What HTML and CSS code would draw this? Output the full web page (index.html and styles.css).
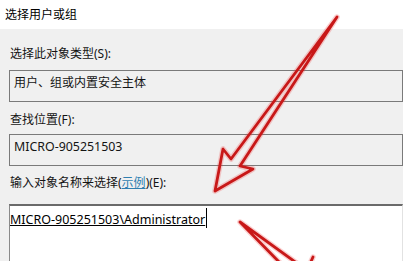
FILE: index.html
```html
<!DOCTYPE html>
<html lang="zh-CN">
<head>
<meta charset="utf-8">
<title>选择用户或组</title>
<link rel="stylesheet" href="styles.css">
</head>
<body>
<div class="page">
  <div class="titlebar">选择用户或组</div>
  <div class="content">
    <div class="label label-type">选择此对象类型(S):</div>
    <div class="box box-type">用户、组或内置安全主体</div>
    <div class="label label-loc">查找位置(F):</div>
    <div class="box box-loc">MICRO-905251503</div>
    <div class="label label-name">输入对象名称来选择(<span class="link">示例</span>)(E):</div>
    <div class="editor"><span class="entry">MICRO-905251503\Administrator</span><span class="caret"></span></div>
  </div>
  <svg class="annotations" width="403" height="261" viewBox="0 0 403 261">
    <g class="glow">
      <polygon points="337,17 231,159 223,149 215,191 253,169 240,166"/>
      <polyline points="283,266 240,222 298,264"/>
      <polyline points="313,257 309,266"/>
    </g>
    <g class="ink">
      <polygon points="337,17 231,159 223,149 215,191 253,169 240,166"/>
      <polyline points="283,266 240,222 298,264"/>
      <polyline points="313,257 309,266"/>
    </g>
  </svg>
</div>
</body>
</html>
```
FILE: styles.css
```css
html, body {
  margin: 0;
  padding: 0;
}
body {
  background: #f0f0f0;
  font-family: "Noto Sans", "Noto Sans CJK SC", sans-serif;
  font-size: 12px;
  color: #141414;
}
.page {
  position: relative;
  width: 403px;
  height: 261px;
  overflow: hidden;
}
.titlebar {
  height: 29px;
  line-height: 29px;
  background: #ffffff;
  padding-left: 5px;
  color: #000;
}
.content {
  padding-left: 9px;
  display: flex;
  flex-direction: column;
}
.label {
  height: 20px;
  line-height: 20px;
  padding-left: 1px;
}
.label-type { margin-top: 15px; margin-bottom: 6px; }
.label-loc { margin-top: 8px; margin-bottom: 4px; }
.label-name { margin-top: 7px; margin-bottom: 11px; }
.link {
  color: #2f7fb0;
  text-decoration: underline;
}
.box {
  border: 1px solid #7a7a7a;
  padding: 4px 4px 0;
  line-height: 16px;
  box-sizing: border-box;
  height: 32px;
  background: #f0f0f0;
}
.box-loc {
  font-size: 12.4px;
}
.editor {
  height: 70px;
  background: #ffffff;
  border-top: 2px solid #6a6a6a;
  border-left: 1px solid #8a8a8a;
  border-right: 1px solid #e2e2e2;
  padding-top: 6px;
  line-height: 16px;
  display: flex;
  align-items: flex-start;
}
.entry {
  color: #000;
  font-size: 12.5px;
  text-decoration: underline;
}
.caret {
  width: 1px;
  height: 20px;
  margin-top: -4px;
  background: #000;
  margin-left: 1px;
}
.annotations {
  position: absolute;
  left: 0;
  top: 0;
  fill: none;
  stroke-linejoin: round;
  stroke-linecap: round;
}
.glow {
  stroke: rgba(240, 60, 60, 0.25);
  stroke-width: 5.5;
}
.ink {
  stroke: #c81818;
  stroke-width: 2.8;
}
```
